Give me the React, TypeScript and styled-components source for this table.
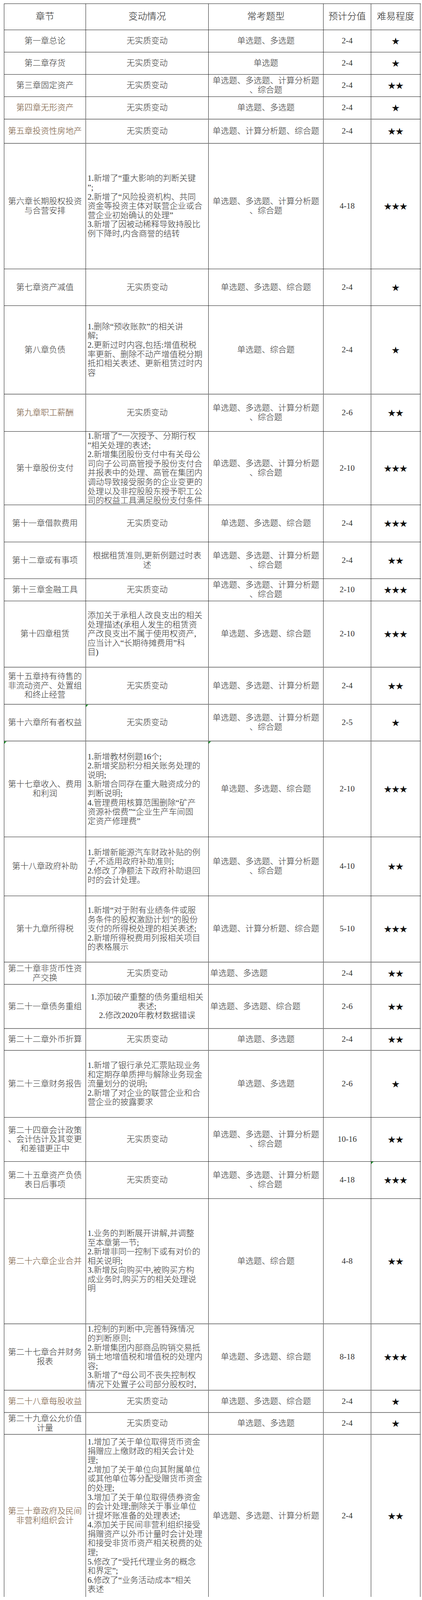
import React from "react";
import styled, { createGlobalStyle } from "styled-components";

const GlobalStyle = createGlobalStyle`
  body {
    margin: 0;
    background: #fff;
    font-family: "Liberation Serif", "Noto Sans CJK SC", serif;
    color: #333;
  }
`;

const Page = styled.div`
  padding: 9px 0 0 10px;
`;

const Table = styled.div`
  width: 1066px;
  border-left: 1px solid #1e1e1e;
  border-top: 1px solid #1e1e1e;
`;

const Row = styled.div<{ $h: number; $rule: "dark" | "grey" | "none" }>`
  display: grid;
  grid-template-columns: 209px 314px 294px 122px 126px;
  grid-template-rows: 100%;
  height: ${(p) => p.$h}px;
  box-sizing: border-box;
  overflow: hidden;
  border-bottom: ${(p) =>
    p.$rule === "grey"
      ? "2px solid #7d7d7d"
      : p.$rule === "none"
      ? "0"
      : "1px solid #1e1e1e"};
`;

const Cell = styled.div<{ $align?: "left" | "center"; $tint?: boolean }>`
  position: relative;
  box-sizing: border-box;
  min-width: 0;
  min-height: 0;
  height: 100%;
  overflow: hidden;
  border-right: 1px solid #1e1e1e;
  padding: 0 4px;
  display: flex;
  flex-direction: column;
  justify-content: safe center;
  align-items: ${(p) => (p.$align === "left" ? "flex-start" : "center")};
  text-align: ${(p) => (p.$align === "left" ? "left" : "center")};
  font-size: 21px;
  line-height: 23.6px;
  font-weight: 300;
  color: ${(p) => (p.$tint ? "#6f5033" : "#333")};
`;

const HeadCell = styled(Cell)`
  font-size: 24px;
  color: #222;
`;

const Line = styled.span`
  display: block;
  flex: none;
  height: 23.6px;
  white-space: nowrap;
`;

const Stars = styled.span`
  display: block;
  height: 24px;
  font-family: "Noto Sans CJK SC", "DejaVu Sans", sans-serif;
  font-size: 20px;
  line-height: 24px;
  color: #111;
  white-space: nowrap;
`;

const Flag = styled.span`
  position: absolute;
  top: 0;
  left: 0;
  width: 0;
  height: 0;
  border-top: 6px solid #1f9a2f;
  border-right: 6px solid transparent;
`;

type Item = {
  h: number;
  ch: string[];
  chg?: string[];
  chgLeft?: boolean;
  ty: string[];
  tyLeft?: boolean;
  sc: string;
  st: number;
  rule?: "grey" | "none";
  tint?: boolean;
  flags?: number[];
};

const ALL = ["单选题、多选题、计算分析题", "、综合题"];

const rows: Item[] = [
  { h: 57, ch: ["第一章总论"], ty: ["单选题、多选题"], sc: "2-4", st: 1 },
  { h: 57, ch: ["第二章存货"], ty: ["单选题"], sc: "2-4", st: 1 },
  { h: 57, ch: ["第三章固定资产"], ty: ALL, sc: "2-4", st: 2 },
  { h: 58, ch: ["第四章无形资产"], ty: ["单选题、多选题"], sc: "2-4", st: 1, rule: "grey", tint: true },
  { h: 62, ch: ["第五章投资性房地产"], ty: ["单选题、计算分析题、综合题"], sc: "2-4", st: 2, rule: "grey", tint: true },
  {
    h: 321,
    ch: ["第六章长期股权投资", "与合营安排"],
    chg: [
      "1.新增了“重大影响的判断关键",
      "”;",
      "2.新增了“风险投资机构、共同",
      "资金等投资主体对联营企业或合",
      "营企业初始确认的处理”",
      "3.新增了因被动稀释导致持股比",
      "例下降时,内含商誉的结转",
    ],
    chgLeft: true,
    ty: ALL,
    sc: "4-18",
    st: 3,
  },
  { h: 94, ch: ["第七章资产减值"], ty: ["单选题、多选题、综合题"], sc: "2-4", st: 1 },
  {
    h: 227,
    ch: ["第八章负债"],
    chg: [
      "1.删除“预收账款”的相关讲",
      "解;",
      "2.更新过时内容,包括:增值税税",
      "率更新、删除不动产增值税分期",
      "抵扣相关表述、更新租赁过时内",
      "容",
    ],
    chgLeft: true,
    ty: ["单选题、综合题"],
    sc: "2-4",
    st: 1,
    rule: "grey",
  },
  { h: 95, ch: ["第九章职工薪酬"], ty: ALL, sc: "2-6", st: 2, tint: true },
  {
    h: 188,
    ch: ["第十章股份支付"],
    chg: [
      "1.新增了“一次授予、分期行权",
      "”相关处理的表述;",
      "2.新增集团股份支付中有关母公",
      "司向子公司高管授予股份支付合",
      "并报表中的处理、高管在集团内",
      "调动导致接受服务的企业变更的",
      "处理以及非控股股东授予职工公",
      "司的权益工具满足股份支付条件",
    ],
    chgLeft: true,
    ty: ALL,
    sc: "2-10",
    st: 3,
  },
  { h: 95, ch: ["第十一章借款费用"], ty: ["单选题、多选题、综合题"], sc: "2-4", st: 3 },
  {
    h: 94,
    ch: ["第十二章或有事项"],
    chg: ["根据租赁准则,更新例题过时表", "述"],
    ty: ALL,
    sc: "2-4",
    st: 2,
  },
  { h: 57, ch: ["第十三章金融工具"], ty: ALL, sc: "2-10", st: 3 },
  {
    h: 170,
    ch: ["第十四章租赁"],
    chg: [
      "添加关于承租人改良支出的相关",
      "处理描述(承租人发生的租赁资",
      "产改良支出不属于使用权资产,",
      "应当计入“长期待摊费用”科",
      "目)",
    ],
    chgLeft: true,
    ty: ["单选题、多选题、综合题"],
    sc: "2-10",
    st: 3,
    rule: "grey",
  },
  {
    h: 95,
    ch: ["第十五章持有待售的", "非流动资产、处置组", "和终止经营"],
    ty: ["单选题、多选题、计算分析题"],
    sc: "2-4",
    st: 2,
    rule: "grey",
  },
  { h: 94, ch: ["第十六章所有者权益"], ty: ALL, sc: "2-5", st: 1, rule: "grey", flags: [1] },
  {
    h: 245,
    ch: ["第十七章收入、费用", "和利润"],
    chg: [
      "1.新增教材例题16个;",
      "2.新增奖励积分相关账务处理的",
      "说明;",
      "3.新增合同存在重大融资成分的",
      "判断说明;",
      "4.管理费用核算范围删除“矿产",
      "资源补偿费”“企业生产车间固",
      "定资产修理费”",
    ],
    chgLeft: true,
    ty: ["单选题、多选题、综合题"],
    sc: "2-10",
    st: 3,
    flags: [0, 2],
  },
  {
    h: 151,
    ch: ["第十八章政府补助"],
    chg: [
      "1.新增新能源汽车财政补贴的例",
      "子,不适用政府补助准则;",
      "2.修改了净额法下政府补助退回",
      "时的会计处理。",
    ],
    chgLeft: true,
    ty: ALL,
    sc: "4-10",
    st: 2,
  },
  {
    h: 170,
    ch: ["第十九章所得税"],
    chg: [
      "1.新增“对于附有业绩条件或服",
      "务条件的股权激励计划”的股份",
      "支付的所得税处理的相关表述;",
      "2.新增所得税费用列报相关项目",
      "的表格展示",
    ],
    chgLeft: true,
    ty: ["单选题、计算分析题、综合题"],
    sc: "5-10",
    st: 3,
    rule: "grey",
  },
  {
    h: 57,
    ch: ["第二十章非货币性资", "产交换"],
    ty: ["单选题、多选题"],
    tyLeft: true,
    sc: "2-4",
    st: 2,
    rule: "grey",
  },
  {
    h: 113,
    ch: ["第二十一章债务重组"],
    chg: ["1.添加破产重整的债务重组相关", "表述;", "2.修改2020年教材数据错误"],
    ty: ["单选题、多选题、综合题"],
    tyLeft: true,
    sc: "2-6",
    st: 2,
    rule: "grey",
  },
  { h: 56, ch: ["第二十二章外币折算"], ty: ["单选题、多选题"], sc: "2-4", st: 2, rule: "grey" },
  {
    h: 171,
    ch: ["第二十三章财务报告"],
    chg: [
      "1.新增了银行承兑汇票贴现业务",
      "和定期存单质押与解除业务现金",
      "流量划分的说明;",
      "2.新增了对企业的联营企业和合",
      "营企业的披露要求",
    ],
    chgLeft: true,
    ty: ["单选题、多选题"],
    sc: "2-6",
    st: 1,
  },
  {
    h: 113,
    ch: ["第二十四章会计政策", "、会计估计及其变更", "和差错更正中"],
    ty: ALL,
    sc: "10-16",
    st: 2,
  },
  {
    h: 95,
    ch: ["第二十五章资产负债", "表日后事项"],
    ty: ALL,
    sc: "4-18",
    st: 3,
    flags: [4],
  },
  {
    h: 321,
    ch: ["第二十六章企业合并"],
    chg: [
      "1.业务的判断展开讲解,并调整",
      "至本章第一节;",
      "2.新增非同一控制下或有对价的",
      "相关说明;",
      "3.新增反向购买中,被购买方构",
      "成业务时,购买方的相关处理说",
      "明",
    ],
    chgLeft: true,
    ty: ["单选题、综合题"],
    sc: "4-8",
    st: 2,
    rule: "grey",
    tint: true,
  },
  {
    h: 170,
    ch: ["第二十七章合并财务", "报表"],
    chg: [
      "1.控制的判断中,完善特殊情况",
      "的判断原则;",
      "2.新增集团内部商品购销交易抵",
      "销土地增值税和增值税的处理内",
      "容;",
      "3.新增了“母公司不丧失控制权",
      "情况下处置子公司部分股权时,",
    ],
    chgLeft: true,
    ty: ["单选题、多选题、综合题"],
    sc: "8-18",
    st: 3,
    rule: "grey",
  },
  {
    h: 57,
    ch: ["第二十八章每股收益"],
    ty: ["单选题、多选题、综合题"],
    sc: "2-4",
    st: 1,
    rule: "grey",
    tint: true,
  },
  {
    h: 56,
    ch: ["第二十九章公允价值", "计量"],
    ty: ["单选题、多选题"],
    sc: "2-4",
    st: 1,
    rule: "grey",
  },
  {
    h: 415,
    ch: ["第三十章政府及民间", "非营利组织会计"],
    chg: [
      "1.增加了关于单位取得货币资金",
      "捐赠应上缴财政的相关会计处",
      "理;",
      "2.增加了关于单位向其附属单位",
      "或其他单位等分配受赠货币资金",
      "的处理;",
      "3.增加了关于单位取得债券资金",
      "的会计处理;删除关于事业单位",
      "计提坏账准备的处理表述;",
      "4.添加关于民间非营利组织接受",
      "捐赠资产以外币计量时会计处理",
      "和接受非货币资产相关税费的处",
      "理;",
      "5.修改了“受托代理业务的概念",
      "和界定”;",
      "6.修改了“业务活动成本”相关",
      "表述",
    ],
    chgLeft: true,
    ty: ["单选题、多选题、计算分析题"],
    sc: "2-4",
    st: 2,
    rule: "none",
    tint: true,
  },
];

const Lines = ({ text }: { text: string[] }) => (
  <>
    {text.map((t, i) => (
      <Line key={i}>{t}</Line>
    ))}
  </>
);

export default function App() {
  return (
    <Page>
      <GlobalStyle />
      <Table>
        <Row $h={67} $rule="dark">
          <HeadCell>
            <Line>章节</Line>
          </HeadCell>
          <HeadCell>
            <Line>变动情况</Line>
          </HeadCell>
          <HeadCell>
            <Line>常考题型</Line>
          </HeadCell>
          <HeadCell>
            <Line>预计分值</Line>
          </HeadCell>
          <HeadCell>
            <Line>难易程度</Line>
          </HeadCell>
        </Row>
        {rows.map((r, i) => {
          const flag = (n: number) => (r.flags?.includes(n) ? <Flag /> : null);
          return (
            <Row key={i} $h={r.h} $rule={r.rule ?? "dark"}>
              <Cell $tint={r.tint}>
                {flag(0)}
                <Lines text={r.ch} />
              </Cell>
              <Cell $align={r.chgLeft ? "left" : "center"}>
                {flag(1)}
                <Lines text={r.chg ?? ["无实质变动"]} />
              </Cell>
              <Cell $align={r.tyLeft ? "left" : "center"}>
                {flag(2)}
                <Lines text={r.ty} />
              </Cell>
              <Cell>
                <Line>{r.sc}</Line>
              </Cell>
              <Cell>
                {flag(4)}
                <Stars>{"★".repeat(r.st)}</Stars>
              </Cell>
            </Row>
          );
        })}
      </Table>
    </Page>
  );
}
